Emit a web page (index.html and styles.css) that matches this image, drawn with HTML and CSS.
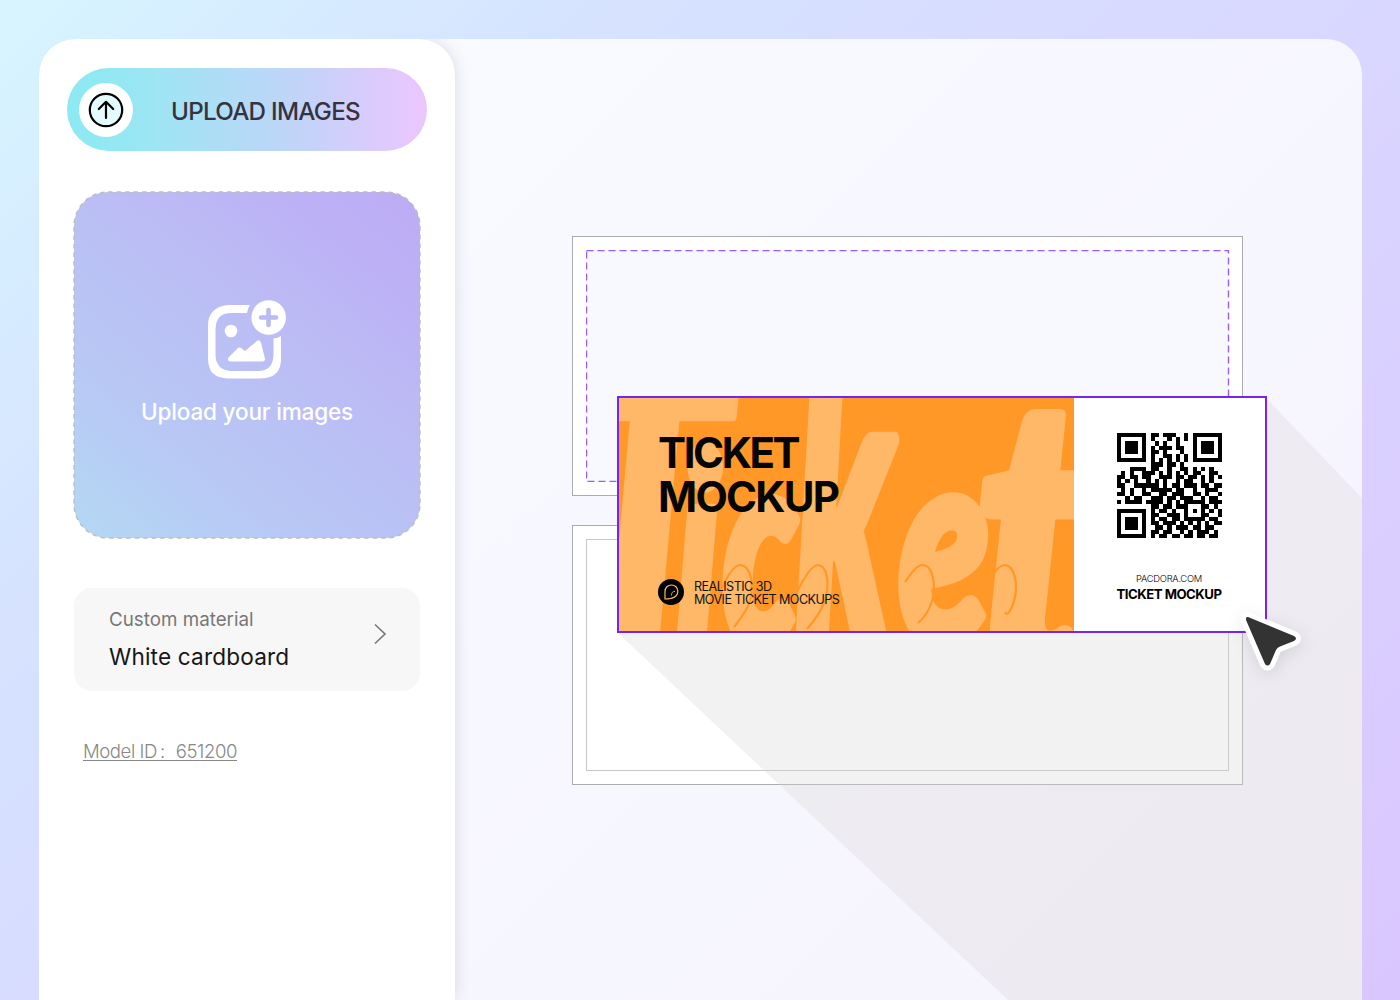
FILE: index.html
```
<!DOCTYPE html>
<html lang="en">
<head>
<meta charset="utf-8">
<title>Ticket mockup editor</title>
<link rel="stylesheet" href="styles.css">
</head>
<body>
<main class="app">
  <aside class="sidebar">
    <button class="upload-button">
      <span class="upload-badge">
        <svg width="36" height="36" viewBox="0 0 36 36" fill="none" stroke="#000" stroke-width="2.2" stroke-linecap="round" stroke-linejoin="round">
          <circle cx="18" cy="18" r="16.2" fill="#e3fbff"/>
          <path d="M18 26V10M10.8 17L18 9.8L25.2 17"/>
        </svg>
      </span>
      <span class="upload-label">UPLOAD IMAGES</span>
    </button>
    <section class="dropzone">
      <svg class="dropzone-edge" width="348" height="348" viewBox="0 0 348 348" fill="none"><rect x="1" y="1" width="346" height="346" rx="34" stroke="#bdbdc0" stroke-width="1.4" stroke-dasharray="4.5 4"/></svg>
      <svg class="picture-icon" width="80" height="80" viewBox="0 0 80 80">
        <path d="M42 5H20Q0 7 0 26V59Q0 78 20 78.500H53Q73 78 73 59V36Q70 38 65.500 38.500V55Q65 71 50 71H23Q8 70 7.500 55V29Q8 13 23 13H39Q40 8 42 5Z" fill="#fff"/>
        <circle cx="23" cy="31" r="6.300" fill="#fff"/>
        <path d="M22.500 59L31.500 50L37 54.500L50.500 43L54.500 59Z" fill="#fff" stroke="#fff" stroke-width="5" stroke-linejoin="round"/>
        <circle cx="60.700" cy="17.500" r="17.300" fill="#fff"/>
        <path d="M60.500 10V25M53 17.500H68" stroke="#bbbbf4" stroke-width="4.600" stroke-linecap="round"/>
      </svg>
      <span class="dropzone-label">Upload your images</span>
    </section>
    <section class="material">
      <div class="material-text">
        <span class="material-name">Custom material</span>
        <span class="material-value">White cardboard</span>
      </div>
      <svg width="14" height="22" viewBox="0 0 14 22" fill="none" stroke="#777" stroke-width="1.600"><path d="M2 1.500L12 11L2 20.500"/></svg>
    </section>
    <a class="model-id">Model ID<span class="colon">:</span>651200</a>
  </aside>

  <section class="canvas">
    <div class="dieline dieline-top"><div class="safe-area dashed">
      <svg width="644" height="232" viewBox="0 0 644 232" fill="none"><rect x=".5" y=".5" width="642" height="231" stroke="#9a5cff" stroke-width="1.400" stroke-dasharray="7 4"/></svg>
    </div></div>
    <div class="dieline"><div class="safe-area solid"></div></div>
    <svg class="long-shadow" width="907" height="961" viewBox="455 39 907 961"><path d="M618 633L1008 1000H1362V498L1266 398Z" fill="#d8d5d5" fill-opacity=".3"/></svg>

    <article class="ticket">
      <div class="ticket-main">
        <svg class="lettering" width="455" height="233" viewBox="0 0 455 233">
          <g fill="#ffb868" stroke="#ffb868" stroke-linejoin="round" stroke-width="12">
            <text transform="translate(-58 262) scale(.74 1)" font-size="400" stroke-width="9">T</text>
            <text transform="translate(55 248) scale(.7 1)" font-size="270" stroke-width="6">i</text>
            <text transform="translate(104 246) scale(.6 1)" font-size="275">c</text>
            <text transform="translate(177 248) scale(.47 1)" font-size="400" stroke-width="16">k</text>
            <text transform="translate(280 244) scale(.67 1)" font-size="275">e</text>
            <text transform="translate(356 278) scale(.84 1)" font-size="390">t</text>
          </g>
          <g fill="none" stroke="#ff9827" stroke-width="2.200">
            <path d="M101 194C109 176 116 167 121 167C134 168 134 190 131 203C128 213 122 220 115 229"/>
            <path d="M178 194C187 176 194 167 199 167C210 168 210 190 206 203C202 213 197 221 188 231"/>
            <path d="M286 184C292 176 297 167 304 167C315 168 317 190 313 203C310 213 304 221 299 225"/>
            <path d="M367 186C375 176 379 167 386 167C397 168 399 190 395 203C392 213 388 219 386 214"/>
          </g>
        </svg>
        <h1 class="ticket-title"><span class="title-top">TICKET</span><span class="title-bottom">MOCKUP</span></h1>
        <div class="brand">
          <svg width="26" height="26" viewBox="0 0 26 26" fill="none"><circle cx="13" cy="13" r="13" fill="#000"/><path d="M7 20V12.500C7 8.500 9.800 6 13.500 6C17 6 19.800 8.500 19.800 12C19.800 16.500 16.500 20 7 20Z" stroke="#ffb868" stroke-width="1.200"/><path d="M13.500 16.500C13.500 13.500 14.500 12.500 17 12.300" stroke="#ffb868" stroke-width=".9"/></svg>
          <p class="brand-text"><span>REALISTIC 3D</span><span>MOVIE TICKET MOCKUPS</span></p>
        </div>
      </div>
      <div class="ticket-stub">
        <svg id="qr" width="105" height="105" viewBox="0 0 25 25" shape-rendering="crispEdges"></svg>
        <span class="site">PACDORA.COM</span>
        <strong class="stub-name">TICKET MOCKUP</strong>
      </div>
    </article>
    <svg class="cursor" width="70" height="70" viewBox="0 0 70 70"><path d="M12 13L58 32Q62 34.500 58 37L44 42.500Q41 43.500 40 46L34 60Q31.500 63 29 60L10 16Q9.500 12.500 12 13Z" fill="#333" stroke="#fff" stroke-width="10" stroke-linejoin="round" paint-order="stroke"/></svg>
  </section>
</main>
<script src="qr.js"></script>
</body>
</html>
```
FILE: styles.css
```
* { box-sizing: border-box; }
body { margin: 0; width: 1400px; height: 1000px; overflow: hidden; font-family: Inter, "Liberation Sans", sans-serif; background: linear-gradient(135deg, #d7f5ff 0%, #d6e3ff 25%, #d9d6ff 60%, #dac6ff 100%); }
.app { display: flex; height: 961px; margin: 39px 38px 0 39px; border-radius: 36px 36px 0 0; overflow: hidden; background: linear-gradient(135deg, #f9fcff, #f7f7ff 50%, #f6f4fe); }
.sidebar { position: relative; width: 416px; flex: none; padding: 29px 28px 0; display: flex; flex-direction: column; align-items: flex-start; border-radius: 36px 36px 0 0; background: #fff; box-shadow: 0 0 16px rgba(70, 80, 110, .18); }
.upload-button { display: flex; align-items: center; width: 360px; height: 83px; padding: 0 0 0 12px; border: 0; border-radius: 42px; background: linear-gradient(90deg, #8fe9f2 8%, #a0e4f4 27%, #c3d3f9 66%, #eac6ff 98%); font-family: inherit; }
.upload-badge { display: grid; place-items: center; width: 54px; height: 54px; border-radius: 50%; background: #fff; }
.upload-label { margin: 3px 0 0 38px; color: #35333f; font-size: 24.2px; font-weight: 500; letter-spacing: -.72px; white-space: nowrap; }
.dropzone { position: relative; display: flex; flex-direction: column; align-items: center; width: 346px; height: 346px; margin: 41px 0 0 7px; padding-top: 108px; border-radius: 34px; background: linear-gradient(40deg, #b4d8f3, #b8c8f5 28%, #bbbdf4 58%, #bdb1f6 82%, #bcabf3); }
.dropzone-edge { position: absolute; left: -1px; top: -1px; }
.picture-icon { overflow: visible; margin-left: 2px; }
.dropzone-label { margin-top: 18px; color: #fff; font-size: 22.6px; line-height: 28px; font-weight: 500; letter-spacing: -.2px; white-space: nowrap; }
.material { display: flex; width: 346px; height: 103px; margin: 50px 0 0 7px; padding: 19px 33px 0 35px; justify-content: space-between; border-radius: 18px; background: #f7f7f7; }
.material > svg { margin-top: 16px; }
.material-text { display: flex; flex-direction: column; white-space: nowrap; }
.material-name { color: #777; font-size: 18.8px; line-height: 26px; }
.material-value { margin-top: 9px; color: #161616; font-size: 22.6px; line-height: 30px; letter-spacing: .17px; }
.model-id { margin: 50px 0 0 16px; height: 20px; border-bottom: 1px solid #888; color: #888; font-size: 18.6px; line-height: 20px; font-weight: 300; letter-spacing: -.45px; white-space: nowrap; }
.colon { padding: 0 11px 0 3px; }
.canvas { position: relative; flex: 1; display: flex; flex-direction: column; align-items: flex-start; gap: 29px; padding: 197px 0 0 117px; }
.dieline { width: 671px; height: 260px; padding: 13px; border: 1px solid #acacaf; background: #fff; }
.safe-area { width: 643px; height: 232px; }
.safe-area svg { display: block; }
.dashed { background: #f8f9ff; }
.solid { border: 1px solid #c8c8c8; }
.long-shadow { position: absolute; left: 0; top: 0; }
.ticket { position: absolute; left: 162px; top: 357px; width: 650px; height: 237px; display: flex; border: 2px solid #7524f5; background: #fff; }
.ticket-main { position: relative; width: 455px; height: 233px; padding: 33px 0 0 39px; overflow: hidden; background: #ff9827; }
.lettering { position: absolute; left: 0; top: 0; font-family: Lato, sans-serif; font-weight: 900; font-style: italic; }
.ticket-title { position: relative; display: flex; flex-direction: column; margin: 0; color: #050505; font-size: 42px; line-height: 44px; font-weight: 700; }
.title-top { letter-spacing: -2.4px; }
.title-bottom { letter-spacing: -1.750px; }
.brand { position: relative; display: flex; align-items: center; gap: 10px; margin-top: 58px; }
.brand-text { display: flex; flex-direction: column; margin: 3px 0 0; font-size: 12.6px; line-height: 13px; letter-spacing: -.55px; white-space: nowrap; color: #111; }
.ticket-stub { flex: 1; display: flex; flex-direction: column; align-items: center; padding: 35px 1px 0 0; }
.site { margin-top: 35px; font-size: 9.4px; line-height: 12px; font-weight: 300; letter-spacing: -.25px; }
.stub-name { margin-top: 1px; font-size: 13.2px; line-height: 17px; font-weight: 700; letter-spacing: -.5px; }
.cursor { position: absolute; left: 780.5px; top: 565px; filter: drop-shadow(1px 4px 8px rgba(0, 0, 0, .1)); overflow: visible; }
```
FILE: qr.js
```
const rows = [
  "#######.##.###..#.#######",
  "#.....#.#...#.#.#.#.....#",
  "#.###.#..#.#..#...#.###.#",
  "#.###.#.#.###.##..#.###.#",
  "#.###.#.##.#...#..#.###.#",
  "#.....#.#..##.#.#.#.....#",
  "#######.#.#.#.#.#.#######",
  "........###.##.#.........",
  "...####.##..#..##.#.#.#..",
  ".#.#..###.#.#.#.#.##..##.",
  "##.##.##..###.##.##.#.#.#",
  "#.#.#..#.#.#..#.##..#.#..",
  "##..######.#.##.###.##.##",
  ".#.#..#.#####.##..#..###.",
  "##.#..##..##.###..##.#..#",
  "..#.##..###.##.###..#.##.",
  "#.####.####.#.#.#####.###",
  "........##.##.###...##.#.",
  "#######.#.##.#..#.#.#.#.#",
  "#.....#.##..###.#...##..#",
  "#.###.#.#.##.##.#####.##.",
  "#.###.#.##.###.#.#.#.#.##",
  "#.###.#..##.#.###.##.##..",
  "#.....#.##.##..#.#.###.#.",
  "#######.#.##.##.##.##.##."
];
let d = "";
rows.forEach((row, y) => [...row].forEach((cell, x) => {
  if (cell === "#") d += `M${x} ${y}h1v1h-1z`;
}));
const path = document.createElementNS("http://www.w3.org/2000/svg", "path");
path.setAttribute("d", d);
document.getElementById("qr").append(path);
```
